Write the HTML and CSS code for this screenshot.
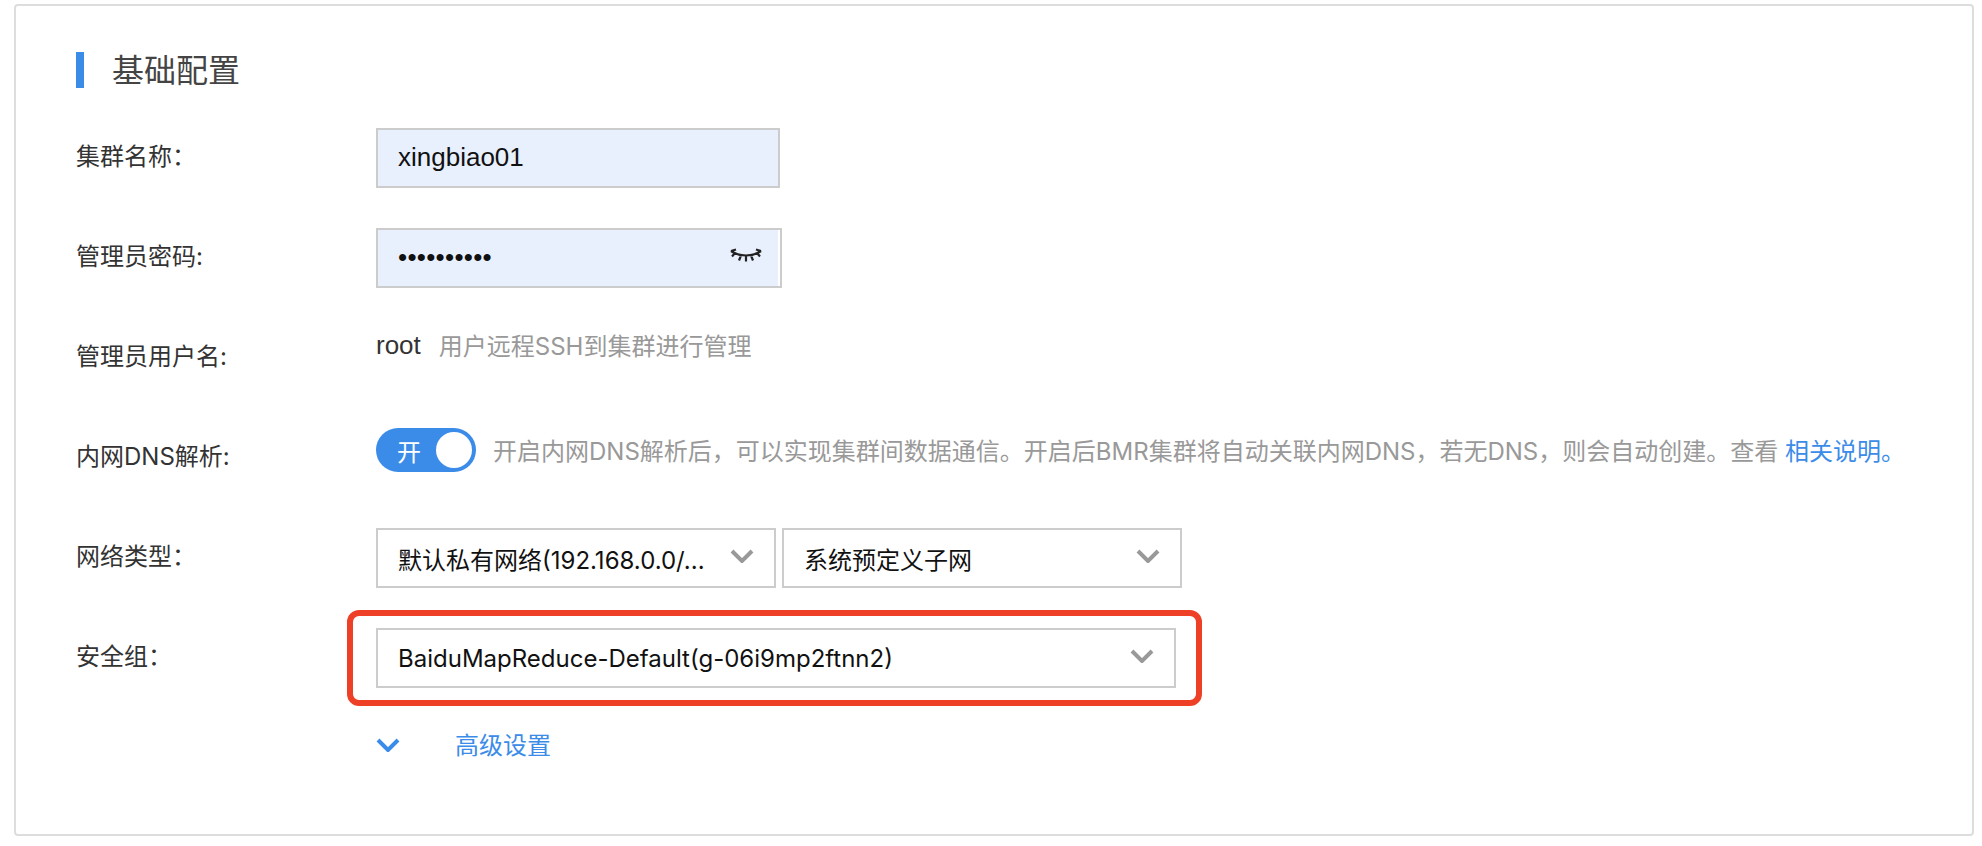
FILE: index.html
```html
<!DOCTYPE html>
<html lang="zh-CN">
<head>
    <meta charset="UTF-8">
    <meta name="viewport" content="width=device-width, initial-scale=1.0">
    <title>基础配置</title>
    <link rel="stylesheet" href="styles.css">
</head>
<body>
    <div class="card">
        <h2 class="card-title">基础配置</h2>

        <div class="row">
            <label class="row-label">集群名称&#65306;</label>
            <input class="field" type="text" value="xingbiao01">
        </div>

        <div class="row">
            <label class="row-label">管理员密码:</label>
            <div class="password">
                <input class="field field-password" type="password" value="1234567890">
                <svg class="eye" width="32" height="14" viewBox="0 0 32 14">
                    <path d="M1 3C9 9 23 9 31 3M1 3l5-1.500M31 3l-5-1.500M5 5L2 8.500M27 5l3 3.500M11 7.500L9 12.500M21 7.500l2 5M16 8v5.500" fill="none" stroke="#222" stroke-width="2.200"/>
                </svg>
            </div>
        </div>

        <div class="row">
            <label class="row-label">管理员用户名:</label>
            <div class="value-line">
                <span class="value-text">root</span>
                <span class="hint hint-user">用户远程SSH到集群进行管理</span>
            </div>
        </div>

        <div class="row">
            <label class="row-label">内网DNS解析:</label>
            <div class="toggle-line">
                <div class="toggle">
                    <span class="toggle-text">开</span>
                    <span class="toggle-knob"></span>
                </div>
                <span class="hint">开启内网DNS解析后&#65292;可以实现集群间数据通信。开启后BMR集群将自动关联内网DNS&#65292;若无DNS&#65292;则会自动创建。查看 <a class="link" href="#">相关说明。</a></span>
            </div>
        </div>

        <div class="row">
            <label class="row-label">网络类型&#65306;</label>
            <div class="select select-vpc">
                <span class="select-text">默认私有网络(192.168.0.0/...</span>
                <svg class="chevron" width="24" height="14" viewBox="0 0 24 14"><path d="M2 2l10 10L22 2" /></svg>
            </div>
            <div class="select select-subnet">
                <span class="select-text">系统预定义子网</span>
                <svg class="chevron" width="24" height="14" viewBox="0 0 24 14"><path d="M2 2l10 10L22 2" /></svg>
            </div>
        </div>

        <div class="row">
            <label class="row-label">安全组&#65306;</label>
            <div class="select select-group">
                <span class="select-text">BaiduMapReduce-Default(g-06i9mp2ftnn2)</span>
                <svg class="chevron" width="24" height="14" viewBox="0 0 24 14"><path d="M2 2l10 10L22 2" /></svg>
                <div class="highlight"></div>
            </div>
        </div>

        <div class="row">
            <div class="row-label"></div>
            <a class="advanced" href="#">
                <svg class="chevron chevron-blue" width="24" height="14" viewBox="0 0 24 14"><path d="M2 2l10 10L22 2" /></svg>
                <span class="advanced-text">高级设置</span>
            </a>
        </div>
    </div>
</body>
</html>
```

FILE: styles.css
```css
* {
    box-sizing: border-box;
}
body {
    margin: 0;
    background: #fff;
    font-family: Inter, "Noto Sans CJK SC", sans-serif;
    font-size: 24px;
    color: #333;
}
.card {
    width: 1960px;
    height: 832px;
    margin: 4px 0 0 14px;
    padding: 46px 60px 0;
    border: 2px solid #ddd;
    border-radius: 4px;
}
.card-title {
    height: 36px;
    margin: 0 0 40px;
    padding-left: 28px;
    border-left: 8px solid #3b8ce8;
    font-size: 32px;
    font-weight: 400;
    line-height: 38px;
    color: #444;
}
.row {
    display: flex;
    height: 60px;
    margin-bottom: 40px;
}
.row-label {
    width: 300px;
    flex-shrink: 0;
    line-height: 58px;
}
.field {
    width: 404px;
    height: 60px;
    padding: 0 20px 2px;
    border: 2px solid #ccc;
    border-radius: 0;
    outline: none;
    background: #e8f0fe;
    font-family: "Liberation Sans", sans-serif;
    font-size: 26px;
    color: #111;
}
.password {
    position: relative;
    width: 406px;
}
.field-password {
    width: 406px;
    letter-spacing: 0.3px;
    box-shadow: inset -2px 0 0 #fff;
}
.eye {
    position: absolute;
    top: 20px;
    right: 20px;
}
.value-line {
    display: flex;
    align-items: center;
    height: 34px;
}
.value-text {
    font-family: "Liberation Sans", sans-serif;
    font-size: 26px;
    color: #333;
}
.hint {
    font-size: 24px;
    color: #999;
}
.hint-user {
    margin-top: -2px;
    margin-left: 18px;
}
.toggle-line {
    display: flex;
    align-items: center;
    gap: 17px;
    height: 44px;
    white-space: nowrap;
}
.toggle-line .hint {
    margin-top: -2px;
}
.toggle {
    display: flex;
    align-items: center;
    justify-content: space-between;
    width: 100px;
    height: 44px;
    padding: 0 4px 0 21px;
    border-radius: 22px;
    background: #3b8ce8;
}
.toggle-text {
    font-size: 24px;
    color: #fff;
}
.toggle-knob {
    width: 36px;
    height: 36px;
    border-radius: 50%;
    background: #fff;
}
.link {
    color: #3b8ce8;
    text-decoration: none;
}
.select {
    position: relative;
    display: flex;
    align-items: center;
    justify-content: space-between;
    height: 60px;
    padding: 0 20px;
    border: 2px solid #ccc;
    background: #fff;
    color: #111;
}
.select-vpc {
    width: 400px;
}
.select-subnet {
    width: 400px;
    margin-left: 6px;
}
.select-group {
    width: 800px;
}
.select-text {
    white-space: nowrap;
}
.chevron {
    flex-shrink: 0;
    margin-top: -4px;
    fill: none;
    stroke: #999;
    stroke-width: 4;
}
.chevron-blue {
    stroke: #3b8ce8;
    margin-top: 0;
}
.highlight {
    position: absolute;
    top: -20px;
    right: -28px;
    bottom: -20px;
    left: -31px;
    border: 6px solid #ee4027;
    border-radius: 12px;
}
.advanced {
    display: flex;
    align-items: center;
    gap: 55px;
    height: 34px;
    color: #3b8ce8;
    text-decoration: none;
}
.advanced-text {
    margin-top: -3px;
}
```
